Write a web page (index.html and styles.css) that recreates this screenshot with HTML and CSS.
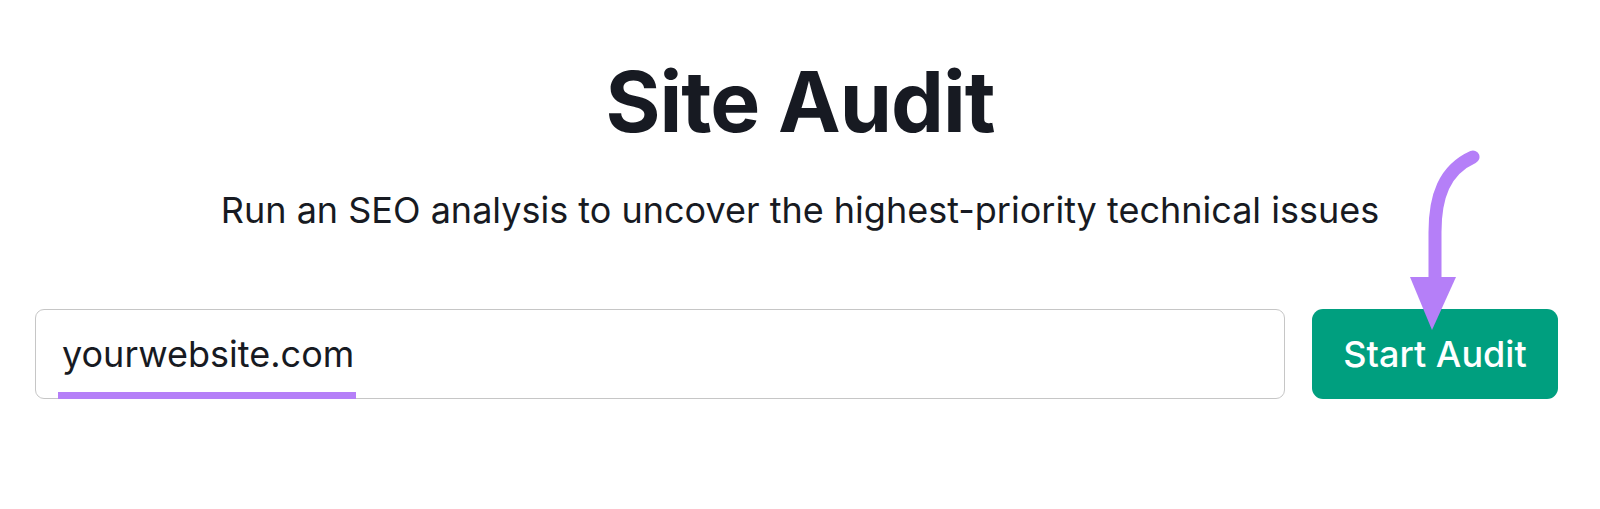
FILE: index.html
```html
<!DOCTYPE html>
<html lang="en">
<head>
<meta charset="utf-8">
<title>Site Audit</title>
<link rel="stylesheet" href="styles.css">
</head>
<body>
<main class="page">
  <h1 class="title">Site Audit</h1>
  <p class="subtitle">Run an SEO analysis to uncover the highest-priority technical issues</p>
  <div class="form-row">
    <div class="field">
      <span class="value">yourwebsite.com</span>
      <span class="underline"></span>
    </div>
    <button class="btn">Start Audit</button>
    <svg class="arrow" width="90" height="200" viewBox="0 0 90 200" aria-hidden="true">
      <path d="M73 17 C44 30 35 57 35 92 L35 142" fill="none" stroke="#b57ff8" stroke-width="13" stroke-linecap="round"/>
      <polygon points="10,137 56,137 32,190" fill="#b57ff8"/>
    </svg>
  </div>
</main>
</body>
</html>
```
FILE: styles.css
```css
html, body {
  margin: 0;
  padding: 0;
  background: #ffffff;
}
body {
  font-family: "Inter", "Noto Sans", sans-serif;
  color: #171a22;
}
.page {
  display: flex;
  flex-direction: column;
  align-items: center;
  padding-top: 52px;
}
.title {
  margin: 0;
  font-size: 84px;
  font-weight: 700;
  line-height: 100px;
  letter-spacing: -1px;
}
.subtitle {
  margin: 36px 0 0 0;
  font-size: 36px;
  font-weight: 400;
  line-height: 44px;
}
.form-row {
  position: relative;
  align-self: stretch;
  display: flex;
  gap: 27px;
  margin: 77px 42px 0 35px;
  height: 90px;
}
.field {
  position: relative;
  flex: 1;
  display: flex;
  align-items: center;
  border: 1.5px solid #c6c6c6;
  border-radius: 9px;
  padding-left: 26px;
}
.value {
  font-size: 36px;
  color: #171a22;
}
.underline {
  position: absolute;
  left: 22px;
  bottom: -8px;
  width: 298px;
  height: 14px;
  background: #b57ff8;
}
.btn {
  width: 246px;
  border: none;
  border-radius: 11px;
  background: #009f7f;
  color: #ffffff;
  font-family: "Inter", "Noto Sans", sans-serif;
  font-size: 36px;
  font-weight: 500;
  padding: 0;
}
.arrow {
  position: absolute;
  left: 1365px;
  top: -169px;
}
```
